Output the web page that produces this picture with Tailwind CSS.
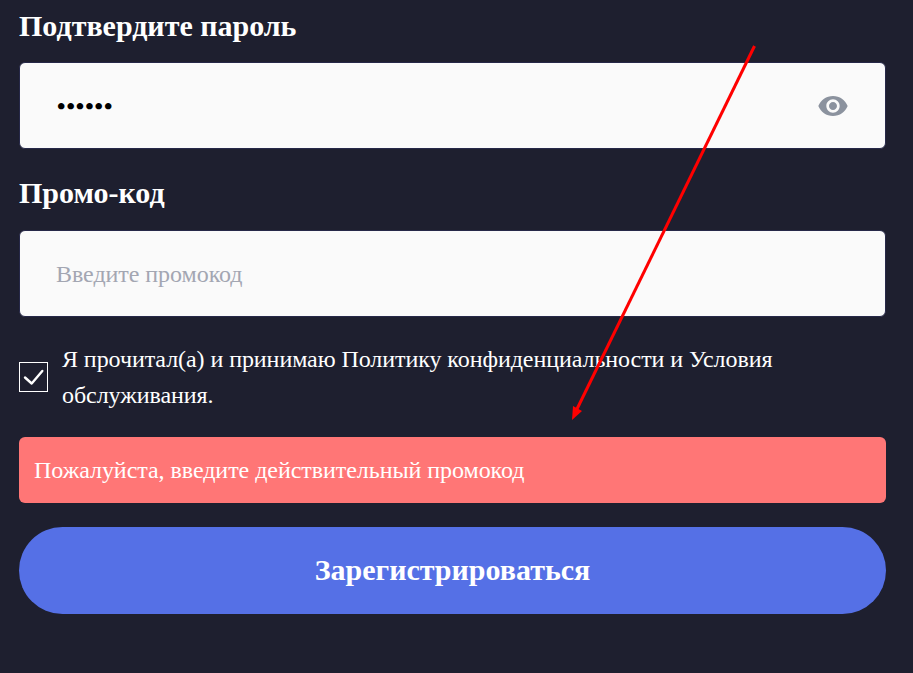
<!DOCTYPE html>
<html>
<head>
<meta charset="utf-8">
<script src="https://cdn.jsdelivr.net/npm/@tailwindcss/browser@4"></script>
</head>
<body class="bg-[#1e1f2f] font-['Liberation_Serif',serif] text-white h-[673px] overflow-hidden relative">
  <form class="flex flex-col pl-[19px] pr-[27px]">
    <label class="text-[30px] font-bold leading-[31px] mt-[10px]">Подтвердите пароль</label>
    <div class="mt-[21px] h-[87px] bg-[#fafafa] rounded-[6px] border border-[#262848] flex items-center justify-between pl-[37px] pr-[36px]">
      <span class="text-black text-[24px] font-bold tracking-[1px]">••••••</span>
      <svg class="w-[32px] h-[32px] -mb-[0px]" viewBox="0 0 24 24" fill="#8b929e"><path d="M12 4.5C7 4.5 2.73 7.61 1 12c1.73 4.39 6 7.5 11 7.5s9.27-3.11 11-7.5c-1.73-4.39-6-7.5-11-7.5zM12 17c-2.76 0-5-2.24-5-5s2.24-5 5-5 5 2.24 5 5-2.24 5-5 5zm0-8c-1.66 0-3 1.34-3 3s1.34 3 3 3 3-1.34 3-3-1.34-3-3-3z"/></svg>
    </div>
    <label class="text-[30px] font-bold leading-[31px] mt-[28px]">Промо-код</label>
    <div class="mt-[22px] h-[87px] bg-[#fafafa] rounded-[6px] border border-[#262848] flex items-center pl-[36px]">
      <span class="text-[#a3a6b2] text-[24px] tracking-[-0.05px]">Введите промокод</span>
    </div>
    <div class="mt-[24px] flex items-center gap-[14px]">
      <span class="w-[29px] h-[30px] border border-white shrink-0">
        <svg class="w-full h-full" viewBox="0 0 27 28" fill="none" stroke="white" stroke-width="2.4" stroke-linecap="round" stroke-linejoin="round"><path d="M5 14.5l6.7 6L22.3 8"/></svg>
      </span>
      <p class="text-[24px] leading-[36px] tracking-[-0.07px]">Я прочитал(а) и принимаю Политику конфиденциальности и Условия обслуживания.</p>
    </div>
    <div class="mt-[24px] h-[66px] bg-[#ff7676] rounded-[6px] flex items-center pl-[15px] text-[24px] tracking-[-0.05px]">Пожалуйста, введите действительный промокод</div>
    <button type="button" class="mt-[24px] h-[87px] bg-[#5570e6] rounded-[44px] text-[30px] font-bold leading-[36px] pb-[1px]">Зарегистрироваться</button>
  </form>
  <svg class="absolute inset-0 w-[913px] h-[673px] pointer-events-none" viewBox="0 0 913 673">
    <line x1="754.5" y1="46" x2="577" y2="409" stroke="#ff0000" stroke-width="3"/>
    <polygon points="572,420 573,406 582,411" fill="#ff0000"/>
  </svg>
</body>
</html>
